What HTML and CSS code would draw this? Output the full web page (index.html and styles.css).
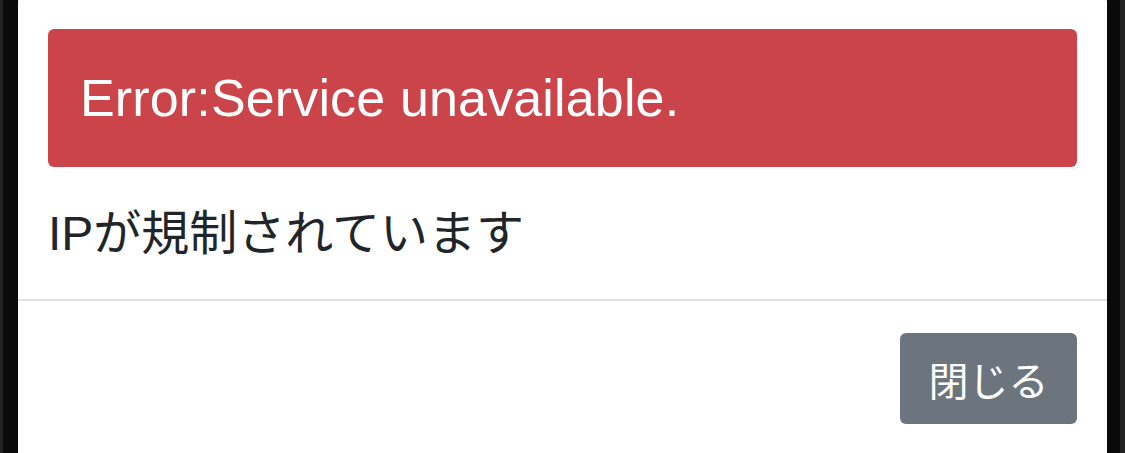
FILE: index.html
```html
<!DOCTYPE html>
<html lang="ja">
	<head>
		<meta charset="UTF-8">
		<title>エラー</title>
		<link rel="stylesheet" href="styles.css">
	</head>
	<body>
		<div class="screen">
			<div class="modal">
				<div class="modal-body">
					<div class="alert">Error:Service unavailable.</div>
					<p class="message">IPが規制されています</p>
				</div>
				<div class="modal-footer">
					<button class="btn-close" type="button">閉じる</button>
				</div>
			</div>
		</div>
	</body>
</html>
```

FILE: styles.css
```css
* {
	margin: 0;
	padding: 0;
	box-sizing: border-box;
}

body {
	background-color: #0a0a0a;
	font-family: "Liberation Sans", "Noto Sans CJK JP", sans-serif;
	color: #212529;
}

.screen {
	height: 453px;
	overflow: hidden;
	border-left: 3px solid #222;
	border-right: 5px solid #222;
	padding: 0 13px 0 15px;
}

.modal {
	margin-top: -6px;
	background-color: #fff;
	border-radius: 8px;
	height: 470px;
}

.modal-body {
	padding: 35px 30px 0;
}

.alert {
	background-color: #cb444a;
	color: #fff;
	border-radius: 6px;
	padding: 30px 32px;
	font-size: 52px;
	line-height: 78px;
	letter-spacing: 0.15px;
}

.message {
	margin-top: 31px;
	font-size: 48px;
	line-height: 72px;
	padding-bottom: 29px;
}

.modal-footer {
	border-top: 2px solid #dee2e6;
	display: flex;
	justify-content: flex-end;
	padding: 32px 30px;
}

.btn-close {
	background-color: #6c757d;
	color: #fff;
	border: none;
	border-radius: 6px;
	font-family: "Noto Sans CJK JP", sans-serif;
	font-size: 40px;
	line-height: 60px;
	padding: 15.5px 28.5px;
}
```
